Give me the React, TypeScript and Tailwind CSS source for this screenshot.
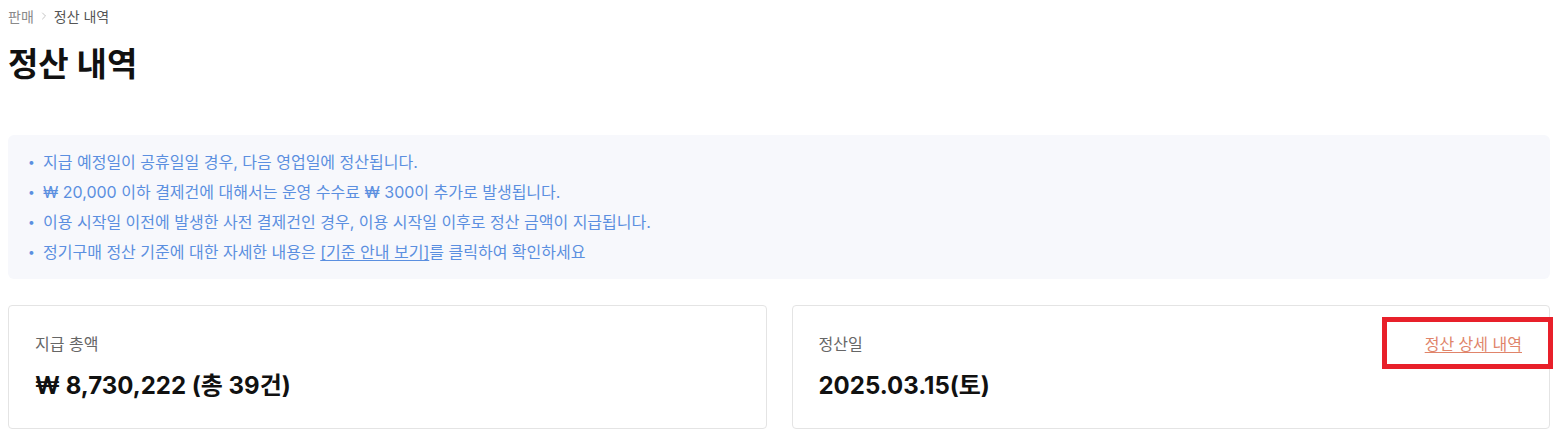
import { ChevronRight } from 'lucide-react';

const notices = [
  '지급 예정일이 공휴일일 경우, 다음 영업일에 정산됩니다.',
  '₩ 20,000 이하 결제건에 대해서는 운영 수수료 ₩ 300이 추가로 발생됩니다.',
  '이용 시작일 이전에 발생한 사전 결제건인 경우, 이용 시작일 이후로 정산 금액이 지급됩니다.',
];

export default function App() {
  return (
    <div
      className="min-h-screen bg-white px-2 pt-[6px] text-[#111]"
      style={{ fontFamily: 'Inter, "Noto Sans CJK KR", sans-serif' }}
    >
      {/* Breadcrumb */}
      <div className="flex h-5 items-center gap-[4px] text-[14px] text-[#8a8a8a]">
        <span>판매</span>
        <ChevronRight className="h-3 w-3 text-[#b0b0b0]" strokeWidth={1.5} />
        <span className="text-[#555]">정산 내역</span>
      </div>

      {/* Title */}
      <h1 className="mt-[18px] text-[33px] font-bold leading-[40px]">정산 내역</h1>

      {/* Notice box */}
      <div className="mt-[51px] rounded-md bg-[#f7f8fc] px-5 py-[12px] text-[16px] text-[#5b8fe0]">
        {notices.map((n) => (
          <div key={n} className="flex h-[30px] items-center gap-[10px]">
            <span className="w-[5px] text-[12px]">•</span>
            <span>{n}</span>
          </div>
        ))}
        <div className="flex h-[30px] items-center gap-[10px]">
          <span className="w-[5px] text-[12px]">•</span>
          <span>
            정기구매 정산 기준에 대한 자세한 내용은{' '}
            <a className="underline underline-offset-2">[기준 안내 보기]</a>를 클릭하여 확인하세요
          </span>
        </div>
      </div>

      {/* Summary cards */}
      <div className="mt-[26px] grid grid-cols-2 gap-[25px]">
        <div className="h-[124px] rounded border border-[#e4e4e4] px-[26px] pt-[26px]">
          <div className="text-[16px] leading-[24px] text-[#666]">지급 총액</div>
          <div className="mt-[15px] text-[24px] font-bold leading-[30px]">₩ 8,730,222 (총 39건)</div>
        </div>
        <div className="relative flex h-[124px] justify-between rounded border border-[#e4e4e4] px-[26px] pt-[26px]">
          <div>
            <div className="text-[16px] leading-[24px] text-[#666]">정산일</div>
            <div className="mt-[15px] text-[24px] font-bold leading-[30px]">2025.03.15(토)</div>
          </div>
          <a className="mr-[1px] text-[16px] leading-[24px] text-[#e0846a] underline underline-offset-2">
            정산 상세 내역
          </a>
          {/* annotation */}
          <div className="pointer-events-none absolute left-[589px] top-[11px] h-[52px] w-[171px] border-[5px] border-[#e8202a]" />
        </div>
      </div>
    </div>
  );
}
